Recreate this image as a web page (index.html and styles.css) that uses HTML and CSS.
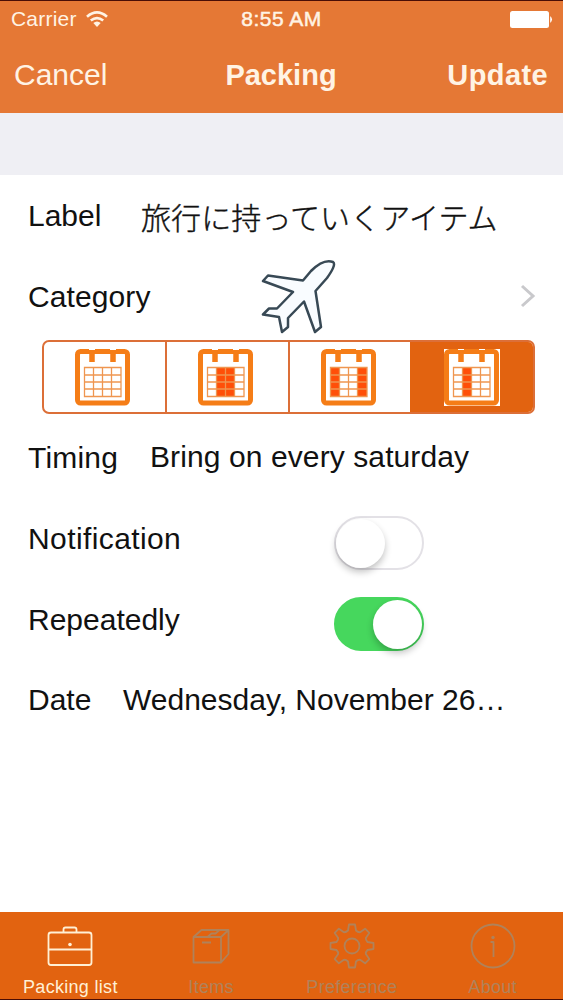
FILE: index.html
```html
<!DOCTYPE html>
<html lang="en">
<head>
    <meta charset="UTF-8">
    <meta name="viewport" content="width=device-width, initial-scale=1.0">
    <title>Packing</title>
    <link rel="stylesheet" href="styles.css">
</head>
<body>
    <!-- calendar shared by the four timing buttons -->
    <svg class="defs">
        <symbol id="calendar" viewBox="0 0 56 57">
            <rect x="2.5" y="2.5" width="50" height="51.5" rx="3" fill="none" stroke="#f57d17" stroke-width="5"/>
            <path d="M17 2v11M38 2v11" stroke="#f57d17" stroke-width="5.5"/>
            <path d="M14 .5h6M35 .5h6" stroke="#fff" stroke-width="1"/>
        </symbol>
        <symbol id="grid" viewBox="0 0 56 57">
            <path d="M9.5 18.5h36.5v29h-36.5zM9.5 26h36.5M9.5 33h36.5M9.5 40h36.5M18.5 18.5v29M27.5 18.5v29M36.5 18.5v29" fill="none" stroke="#ef9650" stroke-width="1.3"/>
        </symbol>
    </svg>

    <div class="screen">
        <header class="header">
            <div class="status-bar">
                <div class="carrier">
                    <span>Carrier</span>
                    <svg width="22" height="17" viewBox="0 0 22 17">
                        <path d="M1 5.7Q11-2.8 21 5.7M4.800 9.5Q11 4.6 17.200 9.500" fill="none" stroke="#fff3e4" stroke-width="2.7"/>
                        <path d="M7.3 12Q11 9 14.7 12L11 16z" fill="#fff3e4"/>
                    </svg>
                </div>
                <span class="time">8:55 AM</span>
                <svg class="battery" width="43" height="17" viewBox="0 0 43 17">
                    <rect width="39" height="17" rx="2.5" fill="#fff"/>
                    <path d="M40.2 5q3.600 3.500 0 7z" fill="#fff"/>
                </svg>
            </div>
            <nav class="nav-bar">
                <span class="nav-cancel">Cancel</span>
                <span class="nav-title">Packing</span>
                <span class="nav-update">Update</span>
            </nav>
        </header>

        <main class="form">
            <div class="row row-label">
                <span class="name">Label</span>
                <span class="value" lang="ja">旅行に持っていくアイテム</span>
            </div>
            <div class="row row-category">
                <span class="name">Category</span>
                <svg class="plane" width="78" height="78" viewBox="0 0 78 78">
                    <path d="M74 4C66 1 57 8 52 13L44 22.5L9 17.5L4 23L34 34L18 50.5H10L4 56.5L20 59L23 74L29 69V60L45 43.5L56 74L62 69L56.5 33L68 20C73 13 77 6 74 4Z" fill="#f9fcff" stroke="#384955" stroke-width="2.5" stroke-linejoin="round"/>
                </svg>
                <svg class="chevron" width="16" height="24" viewBox="0 0 16 24">
                    <path d="M2 2L13 12L2 22" fill="none" stroke="#c9c9cc" stroke-width="3"/>
                </svg>
            </div>
            <div class="segments">
                <div class="segment">
                    <svg width="56" height="57"><use href="#calendar"/><use href="#grid"/></svg>
                </div>
                <div class="segment">
                    <svg width="56" height="57">
                        <use href="#calendar"/>
                        <rect x="18.5" y="18.5" width="18" height="29" fill="#ff4f08"/>
                        <use href="#grid"/>
                    </svg>
                </div>
                <div class="segment">
                    <svg width="56" height="57">
                        <use href="#calendar"/>
                        <path d="M9.5 18.5h9v29h-9zM36.5 18.5h9.5v29h-9.5z" fill="#ff4f08"/>
                        <use href="#grid"/>
                    </svg>
                </div>
                <div class="segment selected">
                    <svg width="56" height="57">
                        <rect width="56" height="57" fill="#fff"/>
                        <use href="#calendar"/>
                        <rect x="18.5" y="18.5" width="9" height="29" fill="#ff4f08"/>
                        <use href="#grid"/>
                    </svg>
                </div>
            </div>
            <div class="row row-timing">
                <span class="name">Timing</span>
                <span class="value">Bring on every saturday</span>
            </div>
            <div class="row row-notification">
                <span class="name name-wide">Notification</span>
                <span class="switch"><span class="knob"></span></span>
            </div>
            <div class="row">
                <span class="name name-wide">Repeatedly</span>
                <span class="switch on"><span class="knob"></span></span>
            </div>
            <div class="row row-date">
                <span class="name">Date</span>
                <span class="value">Wednesday, November 26…</span>
            </div>
        </main>

        <footer class="tab-bar">
            <div class="tab active">
                <svg width="48" height="48" viewBox="-24 -24 48 48">
                    <rect x="-21.5" y="-13.5" width="43" height="32.5" rx="2.5"/>
                    <path d="M-6.5-13.5v-3q0-2 2-2h9q2 0 2 2v3M-21.5 3.5h43"/>
                    <circle class="dot" cx="0" cy="-1.5" r="1.8"/>
                </svg>
                <span>Packing list</span>
            </div>
            <div class="tab">
                <svg width="48" height="48" viewBox="-24 -24 48 48">
                    <path d="M-17.5-9h27.5v25.5h-27.5zM-17.5-9l8-7h27l-7.5 7M17.500-16v24l-7.500 8.5M-3.500-9l4-3.500h4l4-3.500M-9-3.5h9"/>
                </svg>
                <span>Items</span>
            </div>
            <div class="tab">
                <svg width="48" height="48" viewBox="-24 -24 48 48">
                    <path d="M-4-15.5L-3-21.5H3L4-15.5Q6-13.5 8.1-13.8L13.1-17.3L17.3-13.1L13.8-8.1Q13.5-6 15.5-4L21.5-3V3L15.5 4Q13.5 6 13.8 8.1L17.3 13.1L13.1 17.3L8.1 13.8Q6 13.5 4 15.5L3 21.5H-3L-4 15.5Q-6 13.5-8.1 13.8L-13.1 17.3L-17.3 13.1L-13.8 8.1Q-13.5 6-15.5 4L-21.5 3V-3L-15.5-4Q-13.5-6-13.8-8.1L-17.3-13.1L-13.1-17.3L-8.1-13.8Q-6-13.5-4-15.5Z"/>
                    <circle r="7.5"/>
                </svg>
                <span>Preference</span>
            </div>
            <div class="tab">
                <svg width="48" height="48" viewBox="-24 -24 48 48">
                    <circle r="21.5"/>
                    <path d="M-2.5-4h3v15"/>
                    <circle class="dot" cx="0" cy="-8.5" r="1.7"/>
                </svg>
                <span>About</span>
            </div>
        </footer>
    </div>
</body>
</html>
```

FILE: styles.css
```css
* {
    box-sizing: border-box;
}
body {
    margin: 0;
    font-family: "Liberation Sans", "Noto Sans CJK JP", Arial, sans-serif;
    color: #111;
    background-color: white;
}
svg {
    display: block;
    flex-shrink: 0;
}
.defs {
    display: none;
}
.screen {
    display: flex;
    flex-direction: column;
    height: 1000px;
    border-top: 1px solid #4a0d05;
    border-bottom: 1px solid #4a0d05;
    overflow: hidden;
}
.header {
    height: 112px;
    background-color: #e57835;
    color: #fff3e4;
}
.status-bar {
    display: grid;
    grid-template-columns: 1fr auto 1fr;
    align-items: center;
    height: 36px;
    padding: 0 10px 0 11px;
    font-size: 21px;
}
.carrier {
    display: flex;
    align-items: center;
    gap: 9px;
    letter-spacing: 0.2px;
}
.time {
    margin-right: 1px;
    letter-spacing: 0.5px;
    -webkit-text-stroke: 0.5px #fff3e4;
}
.battery {
    justify-self: end;
}
.nav-bar {
    display: grid;
    grid-template-columns: 1fr auto 1fr;
    align-items: center;
    height: 76px;
    padding: 0 15px 0 14px;
    font-size: 30px;
}
.nav-title,
.nav-update {
    font-weight: bold;
    font-size: 29px;
}
.nav-update {
    text-align: right;
    letter-spacing: 0.4px;
}
.form {
    flex: 1;
    border-top: 62px solid #efeff4;
}
.row {
    display: flex;
    align-items: center;
    height: 81px;
    padding-left: 28px;
    font-size: 30px;
    white-space: nowrap;
}
.row-label .name {
    width: 113px;
}
.row-label .value {
    font-family: "Noto Sans CJK JP", sans-serif;
    font-weight: 300;
    line-height: 44px;
    letter-spacing: 0.1px;
    -webkit-text-stroke: 0.4px #111;
}
.row-category .name {
    width: 231px;
    letter-spacing: 0.1px;
}
.chevron {
    margin-left: 183px;
    margin-top: -2px;
}
.segments {
    display: flex;
    width: 493px;
    height: 74px;
    margin: 3px 0 4px 42px;
    border: 2px solid #dc6f38;
    border-radius: 7px;
    overflow: hidden;
}
.segment {
    display: flex;
    flex: 1;
    justify-content: center;
    align-items: center;
    padding-right: 2px;
}
.segment + .segment {
    border-left: 2px solid #dc6f38;
}
.segment.selected {
    background-color: #e26310;
    border-color: #e26310;
}
.row-timing {
    padding-bottom: 2px;
}
.row-timing .name {
    width: 122px;
    letter-spacing: 0.2px;
}
.row-timing .value {
    margin-top: -1px;
    letter-spacing: 0.1px;
}
.row-notification .name {
    letter-spacing: 0.4px;
}
.row-date {
    padding-bottom: 3px;
}
.row-date .name {
    width: 95px;
}
.row-date .value {
    margin-top: -1px;
}
.name-wide {
    width: 306px;
    margin-top: -1px;
}
.switch {
    width: 90px;
    height: 54px;
    margin-top: 7px;
    padding: 2px;
    border: 2px solid #e3e1e6;
    border-radius: 27px;
}
.knob {
    display: block;
    width: 49px;
    height: 49px;
    margin-top: -1px;
    margin-left: -2px;
    border-radius: 50%;
    background-color: white;
    box-shadow: 0 4px 7px rgba(0, 0, 0, 0.24);
}
.switch.on {
    background-color: #46d75d;
    border-color: #46d75d;
}
.switch.on .knob {
    margin-left: 35px;
}
.tab-bar {
    display: flex;
    height: 87px;
    background-color: #e26310;
    color: #b0825a;
}
.tab {
    display: flex;
    flex: 1 1 0;
    flex-direction: column;
    align-items: center;
    padding-top: 10px;
    font-size: 18px;
    line-height: 20px;
    letter-spacing: 0.3px;
    white-space: nowrap;
}
.tab svg {
    fill: none;
    stroke: #b0825a;
    stroke-width: 1.8;
    stroke-linejoin: round;
    margin-bottom: 7px;
}
.tab .dot {
    fill: #b0825a;
    stroke: none;
}
.tab.active {
    color: #fff0d5;
}
.tab.active svg {
    stroke: #fff0d5;
}
.tab.active .dot {
    fill: #fff0d5;
}
```
